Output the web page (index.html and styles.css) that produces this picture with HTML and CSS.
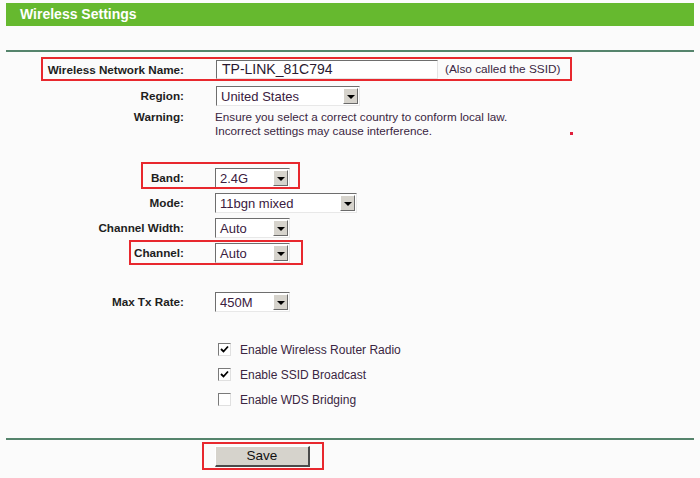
FILE: index.html
```html
<!DOCTYPE html>
<html>
<head>
<meta charset="utf-8">
<link rel="stylesheet" href="styles.css">
</head>
<body>
<div class="page">
  <div class="header">Wireless Settings</div>
  <div class="rule rule-top"></div>

  <div class="form">
    <div class="row row-name">
      <div class="lbl">Wireless Network Name:</div>
      <div class="ctl">
        <div class="txt">TP-LINK_81C794</div>
        <span class="note">(Also called the SSID)</span>
      </div>
      <div class="hl hl-name"></div>
    </div>

    <div class="row">
      <div class="lbl">Region:</div>
      <div class="ctl ctl-shift">
        <div class="sel w-region"><span class="val">United States</span><span class="arr"></span></div>
      </div>
    </div>

    <div class="row-warn">
      <div class="lbl">Warning:</div>
      <div class="warn">Ensure you select a correct country to conform local law.<br>Incorrect settings may cause interference.</div>
      <div class="dot"></div>
    </div>

    <div class="group-sel">
      <div class="row">
        <div class="lbl">Band:</div>
        <div class="ctl"><div class="sel w-small"><span class="val">2.4G</span><span class="arr"></span></div></div>
        <div class="hl hl-band"></div>
      </div>
      <div class="row">
        <div class="lbl">Mode:</div>
        <div class="ctl"><div class="sel w-mode"><span class="val">11bgn mixed</span><span class="arr"></span></div></div>
      </div>
      <div class="row">
        <div class="lbl">Channel Width:</div>
        <div class="ctl"><div class="sel w-small"><span class="val">Auto</span><span class="arr"></span></div></div>
      </div>
      <div class="row">
        <div class="lbl">Channel:</div>
        <div class="ctl"><div class="sel w-small"><span class="val">Auto</span><span class="arr"></span></div></div>
        <div class="hl hl-chan"></div>
      </div>
    </div>

    <div class="row row-tx">
      <div class="lbl">Max Tx Rate:</div>
      <div class="ctl"><div class="sel w-small"><span class="val">450M</span><span class="arr"></span></div></div>
    </div>

    <div class="checks">
      <div class="row">
        <div class="lbl"></div>
        <div class="ctl"><span class="cb on"><svg viewBox="0 0 9 9" width="9" height="9"><path d="M1 4 L3.5 6.5 L8 1.5" fill="none" stroke="#000" stroke-width="1.8"/></svg></span><span class="cbl">Enable Wireless Router Radio</span></div>
      </div>
      <div class="row">
        <div class="lbl"></div>
        <div class="ctl"><span class="cb on"><svg viewBox="0 0 9 9" width="9" height="9"><path d="M1 4 L3.5 6.5 L8 1.5" fill="none" stroke="#000" stroke-width="1.8"/></svg></span><span class="cbl">Enable SSID Broadcast</span></div>
      </div>
      <div class="row">
        <div class="lbl"></div>
        <div class="ctl"><span class="cb"></span><span class="cbl">Enable WDS Bridging</span></div>
      </div>
    </div>
  </div>

  <div class="rule rule-bottom"></div>

  <div class="row row-save">
    <div class="lbl"></div>
    <div class="ctl"><div class="btn">Save</div></div>
    <div class="hl hl-save"></div>
  </div>
</div>
</body>
</html>
```

FILE: styles.css
```css
html, body {
  margin: 0;
  padding: 0;
  background: #fbfbfb;
}
body {
  font-family: "Liberation Sans", Arial, sans-serif;
  color: #222;
}
.page {
  width: 700px;
  height: 478px;
  padding-top: 3px;
  box-sizing: border-box;
}
.header {
  margin: 0 6px;
  height: 23px;
  line-height: 23px;
  background: #66b92f;
  color: #fff;
  font-weight: bold;
  font-size: 14px;
  padding-left: 14px;
}
.rule {
  margin: 0 6px;
  height: 0;
  border-top: 2px solid #55846c;
}
.rule-top {
  margin-top: 24px;
}
.form {
  padding-top: 5px;
}
.row {
  position: relative;
  display: flex;
  align-items: center;
  height: 25px;
  padding-left: 6px;
}
.row-name {
  height: 24px;
  margin-bottom: 2px;
}
.lbl {
  width: 178px;
  flex: none;
  text-align: right;
  font-weight: bold;
  font-size: 11.7px;
  color: #1e1e1e;
}
.ctl {
  margin-left: 31px;
  display: flex;
  align-items: center;
}
.ctl-shift {
  margin-left: 32px;
}
.row-name .ctl {
  margin-left: 32px;
}
.txt {
  width: 222px;
  height: 19px;
  box-sizing: border-box;
  background: #fff;
  border-top: 1px solid #6e6e6e;
  border-left: 1px solid #6e6e6e;
  border-right: 1px solid #e4e4e4;
  border-bottom: 1px solid #e4e4e4;
  font-size: 14px;
  line-height: 17px;
  padding-left: 5px;
  color: #2a1a30;
}
.note {
  margin-left: 7px;
  font-size: 11.8px;
  color: #3a2642;
}
.sel {
  display: flex;
  height: 20px;
  box-sizing: border-box;
  background: #fff;
  border-top: 1px solid #6e6e6e;
  border-left: 1px solid #6e6e6e;
  border-right: 1px solid #e8e8e8;
  border-bottom: 1px solid #e8e8e8;
  padding: 1px;
}
.w-region { width: 144px; }
.w-small { width: 75px; }
.w-mode { width: 142px; }
.val {
  flex: 1;
  font-size: 13px;
  line-height: 17px;
  padding-left: 3px;
  color: #3a2040;
  white-space: nowrap;
  overflow: hidden;
}
.arr {
  position: relative;
  width: 15px;
  flex: none;
  background: #d6d3cc;
  border-top: 1px solid #fff;
  border-left: 1px solid #fff;
  border-right: 1px solid #6a6a6a;
  border-bottom: 1px solid #6a6a6a;
  box-sizing: border-box;
}
.arr::after {
  content: "";
  position: absolute;
  left: 3px;
  top: 6px;
  border-left: 4px solid transparent;
  border-right: 4px solid transparent;
  border-top: 4px solid #000;
}
.row-warn {
  position: relative;
  display: flex;
  padding-left: 6px;
  padding-top: 2px;
  margin-top: 0;
}
.row-warn .lbl {
  line-height: 14px;
}
.warn {
  margin-left: 31px;
  font-size: 11.7px;
  line-height: 14px;
  color: #3a2642;
}
.dot {
  position: absolute;
  left: 570px;
  top: 24px;
  width: 3px;
  height: 3px;
  background: #e0203c;
}
.group-sel {
  margin-top: 27px;
}
.row-tx {
  margin-top: 24px;
}
.checks {
  margin-top: 23px;
}
.checks .ctl {
  margin-left: 34px;
}
.cb {
  width: 13px;
  height: 13px;
  box-sizing: border-box;
  background: #fff;
  border-top: 1px solid #7a7a7a;
  border-left: 1px solid #7a7a7a;
  border-right: 1px solid #e0e0e0;
  border-bottom: 1px solid #e0e0e0;
  display: flex;
  align-items: center;
  justify-content: center;
}
.cbl {
  margin-left: 9px;
  font-size: 12px;
  color: #3a2642;
}
.rule-bottom {
  margin-top: 26px;
}
.row-save {
  margin-top: 6px;
  height: 21px;
}
.btn {
  width: 95px;
  height: 21px;
  box-sizing: border-box;
  background: #d6d3cc;
  border-top: 1px solid #fff;
  border-left: 1px solid #fff;
  border-right: 2px solid #4a4a4a;
  border-bottom: 2px solid #4a4a4a;
  font-size: 13.5px;
  line-height: 18px;
  text-align: center;
  color: #111;
}
.hl {
  position: absolute;
  border: 2px solid #e8282e;
  box-sizing: border-box;
  pointer-events: none;
}
.hl-name {
  left: 41px;
  width: 531px;
  top: 0;
  height: 24px;
}
.hl-band {
  left: 141px;
  width: 159px;
  top: -3px;
  height: 27px;
}
.hl-chan {
  left: 129px;
  width: 174px;
  top: 0;
  height: 25px;
}
.hl-save {
  left: 202px;
  width: 122px;
  top: -4px;
  height: 28px;
}
```
